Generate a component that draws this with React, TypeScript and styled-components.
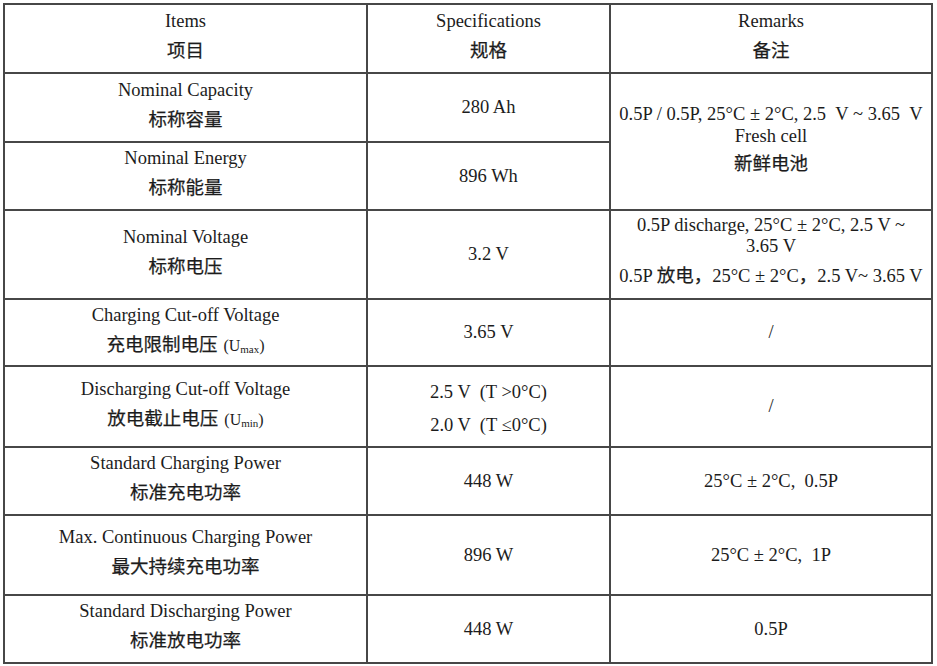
import React from "react";
import styled, { createGlobalStyle } from "styled-components";

const GlobalStyle = createGlobalStyle`
  html, body {
    margin: 0;
    padding: 0;
    background: #ffffff;
  }
  body {
    font-family: "Liberation Serif", "Noto Sans CJK SC", serif;
    color: #1c1c1c;
  }
`;

const LINE = "#474747";

const Page = styled.div`
  padding: 3px 0 0 3px;
`;

const Table = styled.table`
  width: 930px;
  table-layout: fixed;
  border-collapse: separate;
  border-spacing: 0;
  border-top: 2px solid ${LINE};
  border-left: 2px solid ${LINE};
`;

const Row = styled.tr<{ $h: number }>`
  height: ${(p) => p.$h}px;
`;

// $lift moves a cell's content up (positive) or down (negative)
const Cell = styled.td<{ $lift?: number }>`
  box-sizing: border-box;
  border-right: 2px solid ${LINE};
  border-bottom: 2px solid ${LINE};
  padding: ${(p) => Math.max(0, -(p.$lift ?? 0))}px 2px
    ${(p) => Math.max(0, p.$lift ?? 0)}px;
  text-align: center;
  vertical-align: middle;
`;

const Line = styled.div<{ $lh?: number }>`
  font-family: "Liberation Serif", "Noto Sans CJK SC", serif;
  font-size: 18.5px;
  font-weight: 400;
  line-height: ${(p) => p.$lh ?? 27}px;
  height: ${(p) => p.$lh ?? 27}px;
  white-space: nowrap;
`;

const Zh = styled.span`
  font-family: "Noto Sans CJK SC", sans-serif;
  font-weight: 400;
  -webkit-text-stroke: 0.25px #1c1c1c;
`;

const Unit = styled.span`
  font-family: "Liberation Serif", serif;
  font-weight: 400;
  font-size: 16px;
  line-height: 0;
  margin-left: 6px;
  -webkit-text-stroke: 0;

  sub {
    font-size: 11px;
    line-height: 0;
    vertical-align: -2px;
  }
`;

type Item = { en: string; zh: React.ReactNode };

const ItemCell: React.FC<Item> = ({ en, zh }) => (
  <Cell $lift={6}>
    <Line $lh={26}>{en}</Line>
    <Line $lh={30}>
      <Zh>{zh}</Zh>
    </Line>
  </Cell>
);

const Value: React.FC<{ children: React.ReactNode }> = ({ children }) => (
  <Cell>
    <Line>{children}</Line>
  </Cell>
);

export default function App() {
  return (
    <>
      <GlobalStyle />
      <Page>
        <Table>
          <colgroup>
            <col style={{ width: 363 }} />
            <col style={{ width: 243 }} />
            <col style={{ width: 322 }} />
          </colgroup>
          <tbody>
            <Row $h={69}>
              <ItemCell en="Items" zh="项目" />
              <ItemCell en="Specifications" zh="规格" />
              <ItemCell en="Remarks" zh="备注" />
            </Row>
            <Row $h={69}>
              <ItemCell en="Nominal Capacity" zh="标称容量" />
              <Value>280 Ah</Value>
              <Cell rowSpan={2} $lift={3}>
                <Line $lh={22}>0.5P / 0.5P, 25°C ± 2°C, 2.5 &nbsp;V ~ 3.65 &nbsp;V</Line>
                <Line $lh={22}>Fresh cell</Line>
                <Line $lh={30}>
                  <Zh>新鲜电池</Zh>
                </Line>
              </Cell>
            </Row>
            <Row $h={68}>
              <ItemCell en="Nominal Energy" zh="标称能量" />
              <Value>896 Wh</Value>
            </Row>
            <Row $h={89}>
              <ItemCell en="Nominal Voltage" zh="标称电压" />
              <Value>3.2 V</Value>
              <Cell $lift={4}>
                <Line $lh={21}>0.5P discharge, 25°C ± 2°C, 2.5 V ~</Line>
                <Line $lh={21}>3.65 V</Line>
                <Line $lh={34}>
                  0.5P <Zh>放电，</Zh>25°C ± 2°C<Zh>，</Zh>2.5 V~ 3.65 V
                </Line>
              </Cell>
            </Row>
            <Row $h={67}>
              <ItemCell
                en="Charging Cut-off Voltage"
                zh={
                  <>
                    充电限制电压
                    <Unit>
                      (U<sub>max</sub>)
                    </Unit>
                  </>
                }
              />
              <Value>3.65 V</Value>
              <Value>/</Value>
            </Row>
            <Row $h={81}>
              <ItemCell
                en="Discharging Cut-off Voltage"
                zh={
                  <>
                    放电截止电压
                    <Unit>
                      (U<sub>min</sub>)
                    </Unit>
                  </>
                }
              />
              <Cell $lift={-5}>
                <Line $lh={33}>2.5 V &nbsp;(T &gt;0°C)</Line>
                <Line $lh={33}>2.0 V &nbsp;(T ≤0°C)</Line>
              </Cell>
              <Value>/</Value>
            </Row>
            <Row $h={68}>
              <ItemCell en="Standard Charging Power" zh="标准充电功率" />
              <Value>448 W</Value>
              <Value>25°C ± 2°C, &nbsp;0.5P</Value>
            </Row>
            <Row $h={80}>
              <ItemCell en="Max. Continuous Charging Power" zh="最大持续充电功率" />
              <Value>896 W</Value>
              <Value>25°C ± 2°C, &nbsp;1P</Value>
            </Row>
            <Row $h={68}>
              <ItemCell en="Standard Discharging Power" zh="标准放电功率" />
              <Value>448 W</Value>
              <Value>0.5P</Value>
            </Row>
          </tbody>
        </Table>
      </Page>
    </>
  );
}
